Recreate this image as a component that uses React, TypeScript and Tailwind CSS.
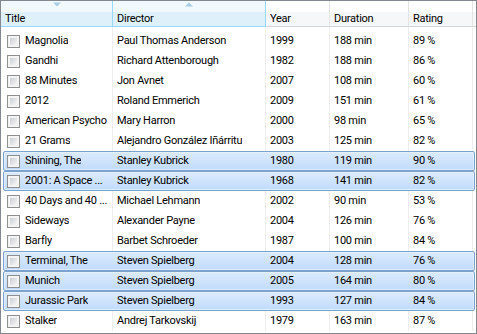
import React from "react";

type Row = { t: string; d: string; y: string; du: string; r: string; sel?: boolean };

const rows: Row[] = [
  { t: "Magnolia", d: "Paul Thomas Anderson", y: "1999", du: "188 min", r: "89 %" },
  { t: "Gandhi", d: "Richard Attenborough", y: "1982", du: "188 min", r: "86 %" },
  { t: "88 Minutes", d: "Jon Avnet", y: "2007", du: "108 min", r: "60 %" },
  { t: "2012", d: "Roland Emmerich", y: "2009", du: "151 min", r: "61 %" },
  { t: "American Psycho", d: "Mary Harron", y: "2000", du: "98 min", r: "65 %" },
  { t: "21 Grams", d: "Alejandro González Iñárritu", y: "2003", du: "125 min", r: "82 %" },
  { t: "Shining, The", d: "Stanley Kubrick", y: "1980", du: "119 min", r: "90 %", sel: true },
  { t: "2001: A Space ...", d: "Stanley Kubrick", y: "1968", du: "141 min", r: "82 %", sel: true },
  { t: "40 Days and 40 ...", d: "Michael Lehmann", y: "2002", du: "90 min", r: "53 %" },
  { t: "Sideways", d: "Alexander Payne", y: "2004", du: "126 min", r: "76 %" },
  { t: "Barfly", d: "Barbet Schroeder", y: "1987", du: "100 min", r: "84 %" },
  { t: "Terminal, The", d: "Steven Spielberg", y: "2004", du: "128 min", r: "76 %", sel: true },
  { t: "Munich", d: "Steven Spielberg", y: "2005", du: "164 min", r: "80 %", sel: true },
  { t: "Jurassic Park", d: "Steven Spielberg", y: "1993", du: "127 min", r: "84 %", sel: true },
  { t: "Stalker", d: "Andrej Tarkovskij", y: "1979", du: "163 min", r: "87 %" },
];

function CheckBox() {
  return (
    <div className="w-[13px] h-[13px] shrink-0 border border-[#8e8f8f] bg-[#f4f4f4] p-[2px]">
      <div className="w-full h-full bg-gradient-to-br from-[#cbcfd5] to-[#f6f6f6]" />
    </div>
  );
}

function SortArrow({ up }: { up?: boolean }) {
  return (
    <svg width="9" height="5" viewBox="0 0 9 5" className="absolute top-[1px] left-1/2 -translate-x-1/2">
      {up ? (
        <polygon points="0.5,4.5 4.5,0.5 8.5,4.5" fill="#a9cde6" />
      ) : (
        <polygon points="0.5,0.5 8.5,0.5 4.5,4.5" fill="#a9cde6" />
      )}
    </svg>
  );
}

function HeaderCell({
  label,
  w,
  sorted,
  arrow,
  sepBlue,
}: {
  label: string;
  w: string;
  sorted?: boolean;
  arrow?: "up" | "down";
  sepBlue?: boolean;
}) {
  return (
    <div
      className={`relative ${w} h-full shrink-0 flex flex-col border-r ${
        sepBlue ? "border-[#96d9f9]" : "border-[#e2e3e4]"
      } ${sorted ? "border-b border-b-[#96d9f9]" : "border-b border-b-[#d5d5d5]"}`}
    >
      <div className={`h-[11px] ${sorted ? "bg-[#f2f9fd]" : "bg-[#ffffff]"}`} />
      <div className={`flex-1 flex items-center pl-[4px] ${sorted ? "bg-[#def1fb]" : "bg-[#f6f7f8]"}`}>
        <span className="leading-[14px] -mt-[1px]">{label}</span>
      </div>
      {arrow && <SortArrow up={arrow === "up"} />}
    </div>
  );
}

const W = ["w-[112px]", "w-[153px]", "w-[64px]", "w-[79px]", "w-[64px]"];

function DataRow({ row }: { row: Row }) {
  const line = row.sel ? "border-transparent" : "border-[#ededed]";
  return (
    <div className="relative flex h-[20px] items-center">
      {row.sel && (
        <div className="absolute top-0 bottom-0 left-[2px] right-[1px] rounded-[2px] border border-[#7da2ce] bg-gradient-to-b from-[#dcebfc] to-[#c1dbfc] shadow-[inset_0_0_0_1px_rgba(235,244,253,0.6)]" />
      )}
      <div className={`relative ${W[0]} h-full shrink-0 flex items-center pl-[6px] gap-[5px] border-r ${line}`}>
        <CheckBox />
        <span className="whitespace-nowrap overflow-hidden">{row.t}</span>
      </div>
      <div className={`relative ${W[1]} h-full shrink-0 flex items-center pl-[4px] border-r ${line}`}>
        <span className="whitespace-nowrap overflow-hidden">{row.d}</span>
      </div>
      <div className={`relative ${W[2]} h-full shrink-0 flex items-center pl-[4px] border-r ${line}`}>
        <span>{row.y}</span>
      </div>
      <div className={`relative ${W[3]} h-full shrink-0 flex items-center pl-[4px] border-r ${line}`}>
        <span>{row.du}</span>
      </div>
      <div className={`relative ${W[4]} h-full shrink-0 flex items-center pl-[4px] border-r ${line}`}>
        <span>{row.r}</span>
      </div>
      <div className="flex-1" />
    </div>
  );
}

export default function App() {
  return (
    <div
      className="w-[477px] h-[334px] border border-[#828790] bg-white overflow-hidden text-[11px] tracking-[-0.25px] text-black"
      style={{ fontFamily: 'Roboto, "Liberation Sans", Arial, sans-serif' }}
    >
      <div className="flex h-[26px]">
        <HeaderCell label="Title" w={W[0]} sorted arrow="down" sepBlue />
        <HeaderCell label="Director" w={W[1]} sorted arrow="up" sepBlue />
        <HeaderCell label="Year" w={W[2]} />
        <HeaderCell label="Duration" w={W[3]} />
        <HeaderCell label="Rating" w={W[4]} />
        <div className="flex-1 flex flex-col border-b border-[#d5d5d5]">
          <div className="h-[11px] bg-white" />
          <div className="flex-1 bg-[#f6f7f8]" />
        </div>
      </div>
      <div className="flex h-[4px]">
        {W.map((w, i) => (
          <div key={i} className={`${w} h-full shrink-0 border-r border-[#ededed]`} />
        ))}
      </div>
      {rows.map((r, i) => (
        <DataRow key={i} row={r} />
      ))}
    </div>
  );
}
